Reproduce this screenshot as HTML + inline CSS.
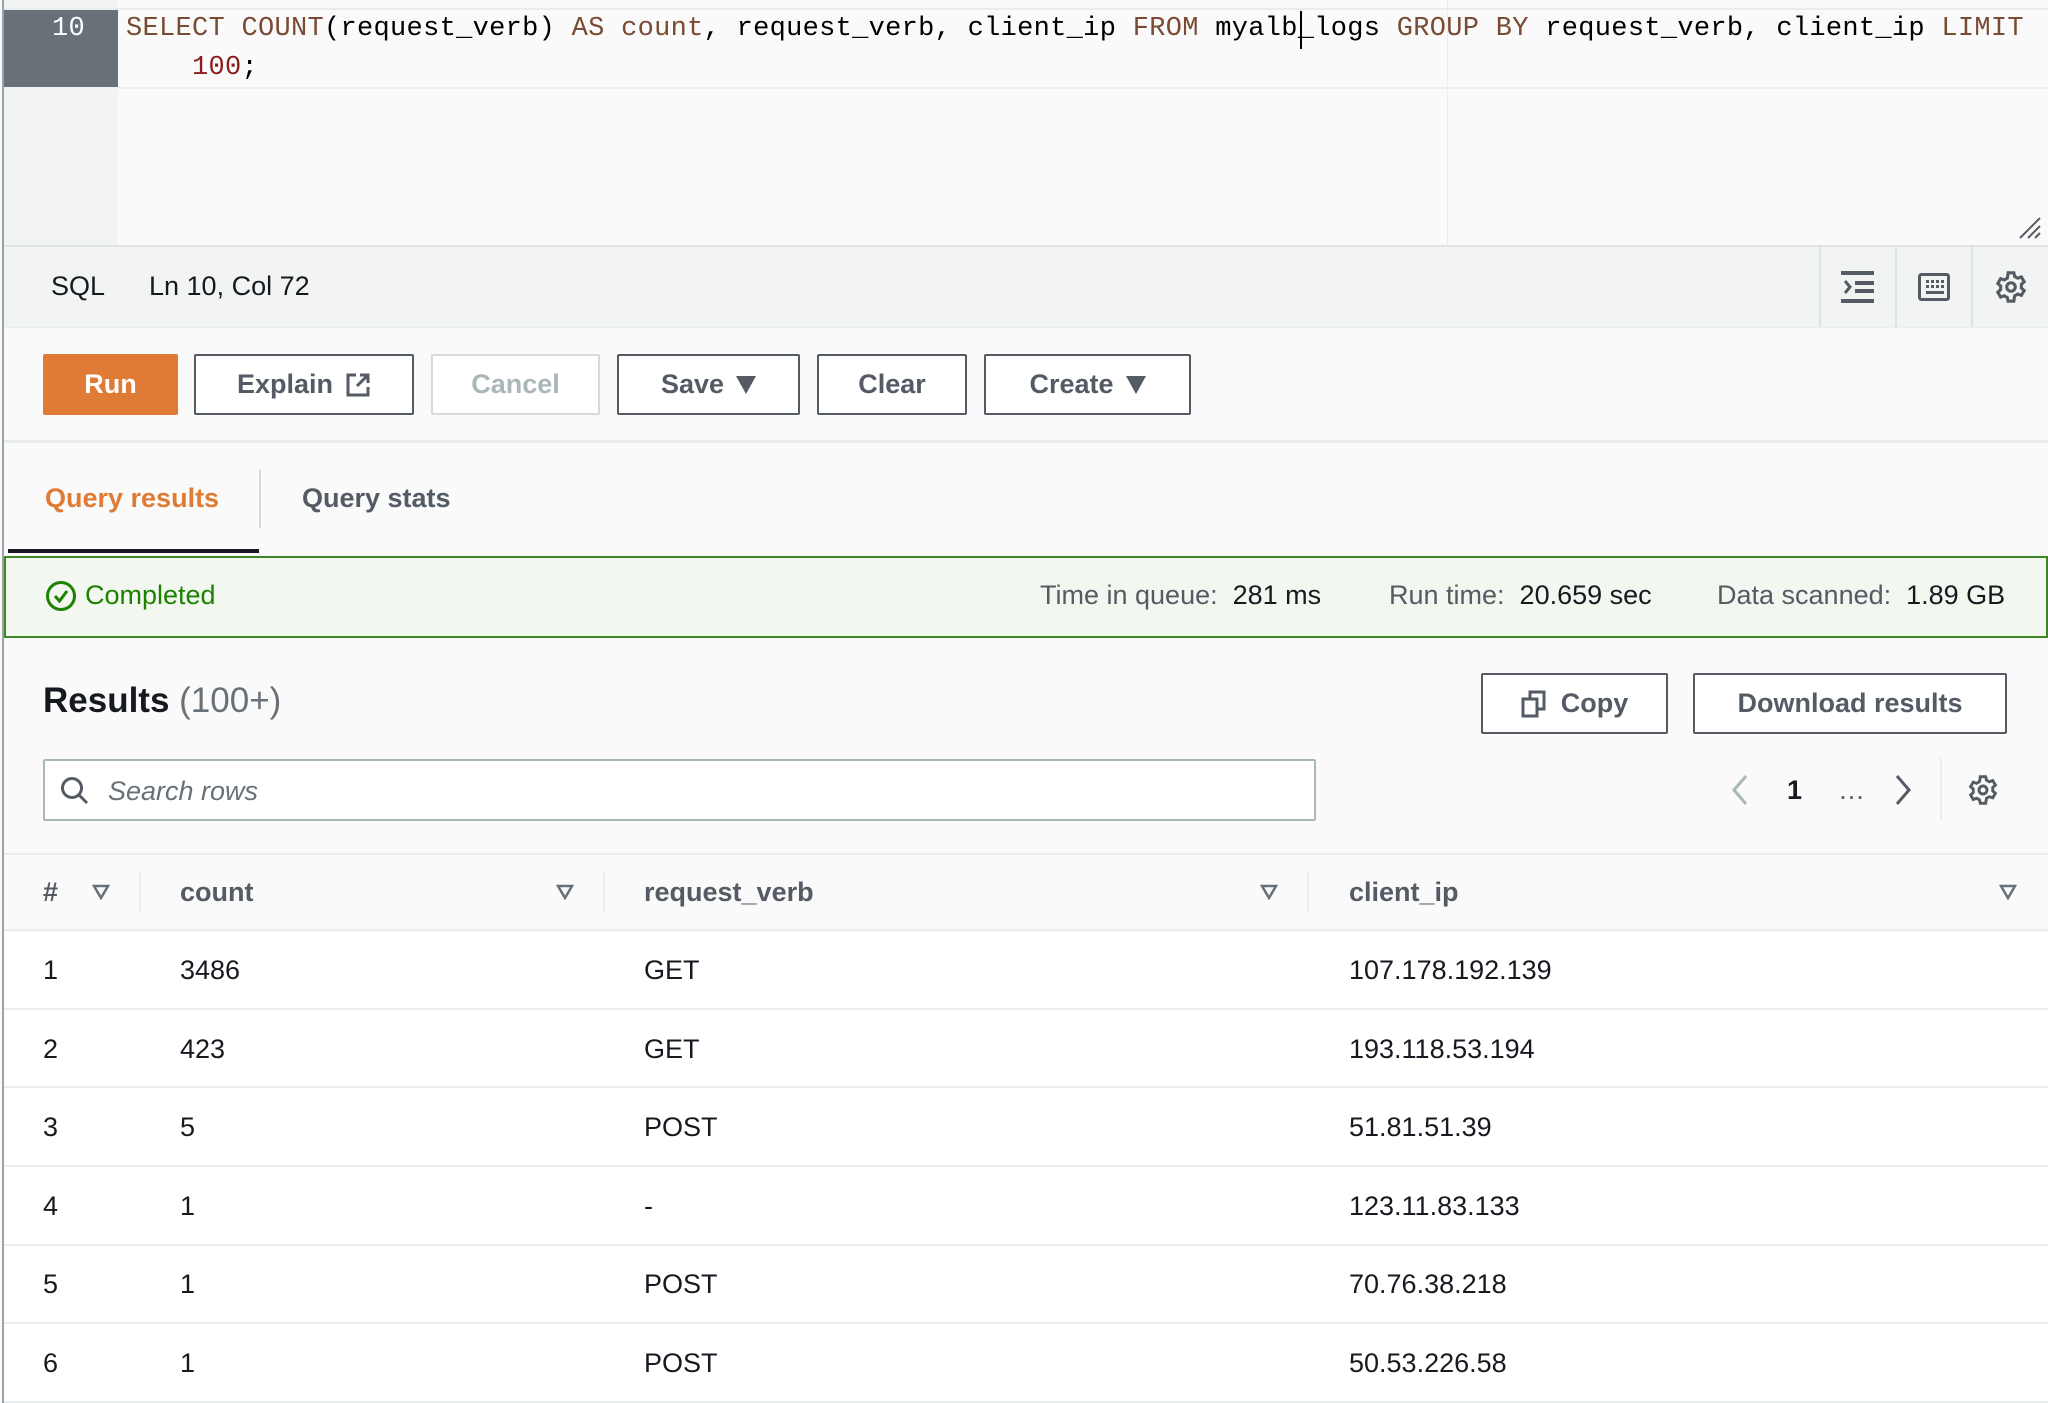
<!DOCTYPE html>
<html><head><meta charset="utf-8"><style>
*{box-sizing:border-box;margin:0;padding:0}
body{width:2048px;height:1403px;overflow:hidden;background:#fafafa;font-family:"Liberation Sans",sans-serif;color:#16191f;position:relative}
.a{position:absolute}
.mono{font-family:"Liberation Mono",monospace;font-size:27px;letter-spacing:0.3px;white-space:pre;color:#000}
.k{color:#7a4b34}
.n{color:#8b1c1c}
.btn{position:absolute;top:354px;height:61px;border:2px solid #545b64;border-radius:2px;background:#fff;font-weight:bold;font-size:27px;color:#545b64;display:flex;align-items:center;justify-content:center;gap:12px}
.t27{font-size:27px}
.hd{position:absolute;top:877px;font-weight:bold;font-size:27px;color:#545b64}
.cell{position:absolute;font-size:27px;color:#16191f}
.rl{position:absolute;left:4px;right:0;height:2px;background:#eaeded}
.vd{position:absolute;width:2px;background:#eaeded}
.tri{position:absolute;top:884px}
</style></head><body>
<div class="a" style="left:2px;top:0;width:2px;height:1403px;background:#9aa3a8"></div>
<!-- editor -->
<div class="a" style="left:4px;top:0;width:114px;height:246px;background:#f2f3f3"></div>
<div class="a" style="left:4px;top:8px;right:0;height:2px;background:#eaeded"></div>
<div class="a" style="left:4px;top:10px;width:114px;height:77px;background:#687078"></div>
<div class="a" style="left:118px;top:87px;right:0;height:2px;background:#eaeded"></div>
<div class="a" style="left:1447px;top:0;width:1px;height:246px;background:#eaeded"></div>
<div class="a mono" style="left:52px;top:14px;color:#fff">10</div>
<div class="a mono" style="left:126px;top:14px"><span class="k">SELECT COUNT</span>(request_verb) <span class="k">AS count</span>, request_verb, client_ip <span class="k">FROM</span> myalb_logs <span class="k">GROUP BY</span> request_verb, client_ip <span class="k">LIMIT</span></div>
<div class="a mono" style="left:192px;top:53px"><span class="n">100</span>;</div>
<div class="a" style="left:1300px;top:11px;width:2px;height:38px;background:#000"></div>
<svg class="a" style="left:2018px;top:216px" width="24" height="24"><path d="M2 22L22 2M10 22L22 10M17 22L22 17" stroke="#545b64" stroke-width="2"/></svg>
<!-- status bar -->
<div class="a" style="left:4px;top:245px;right:0;height:2px;background:#e1e4e4"></div>
<div class="a" style="left:4px;top:247px;right:0;height:80px;background:#f2f3f3"></div>
<div class="a t27" style="left:51px;top:271px">SQL</div>
<div class="a t27" style="left:149px;top:271px">Ln 10, Col 72</div>
<div class="vd" style="left:1819px;top:247px;height:80px;background:#dfe2e2"></div>
<div class="vd" style="left:1895px;top:247px;height:80px;background:#dfe2e2"></div>
<div class="vd" style="left:1971px;top:247px;height:80px;background:#dfe2e2"></div>
<svg class="a" style="left:1841px;top:271px" width="33" height="32"><rect x="0" y="0" width="33" height="4" fill="#545b64"/><rect x="0" y="28" width="33" height="4" fill="#545b64"/><rect x="14" y="10" width="19" height="4" fill="#545b64"/><rect x="14" y="18" width="19" height="4" fill="#545b64"/><path d="M4 10l5 6-5 6" stroke="#545b64" stroke-width="3" fill="none"/></svg>
<svg class="a" style="left:1918px;top:273px" width="32" height="28"><rect x="1.5" y="1.5" width="29" height="25" rx="2" fill="none" stroke="#545b64" stroke-width="3"/><g fill="#545b64"><rect x="8" y="7" width="3" height="3"/><rect x="13" y="7" width="3" height="3"/><rect x="18" y="7" width="3" height="3"/><rect x="23" y="7" width="3" height="3"/><rect x="8" y="12" width="3" height="3"/><rect x="13" y="12" width="3" height="3"/><rect x="18" y="12" width="3" height="3"/><rect x="23" y="12" width="3" height="3"/><rect x="8" y="18" width="18" height="3"/></g></svg>
<svg class="a" style="left:1994px;top:270px" width="34" height="34" viewBox="0 0 24 24"><path fill="none" stroke="#545b64" stroke-width="2.2" d="M10 2h4l.6 2.6 2.2 1.2 2.5-.9 2 3.4-2 1.8v2.6l2 1.8-2 3.4-2.5-.9-2.2 1.2L14 22h-4l-.6-2.6-2.2-1.2-2.5.9-2-3.4 2-1.8v-2.6l-2-1.8 2-3.4 2.5.9 2.2-1.2z"/><circle cx="12" cy="12" r="3" fill="none" stroke="#545b64" stroke-width="2.2"/></svg>
<!-- toolbar -->
<div class="a" style="left:4px;top:327px;right:0;height:1px;background:#eaeded"></div>
<div class="btn" style="left:43px;width:135px;background:#e07b35;border-color:#e07b35;color:#fff">Run</div>
<div class="btn" style="left:194px;width:220px">Explain <svg width="26" height="26" viewBox="0 0 26 26"><path d="M11 3H3v20h20v-8" fill="none" stroke="#545b64" stroke-width="3"/><path d="M15 3h8v8M23 3L12 14" fill="none" stroke="#545b64" stroke-width="3"/></svg></div>
<div class="btn" style="left:431px;width:169px;border-color:#d5dbdb;color:#aab7b8">Cancel</div>
<div class="btn" style="left:617px;width:183px">Save <svg width="20" height="18"><path d="M0 0h20L10 18z" fill="#545b64"/></svg></div>
<div class="btn" style="left:817px;width:150px">Clear</div>
<div class="btn" style="left:984px;width:207px">Create <svg width="20" height="18"><path d="M0 0h20L10 18z" fill="#545b64"/></svg></div>
<div class="a" style="left:4px;top:440px;right:0;height:3px;background:#eaeded"></div>
<!-- tabs -->
<div class="a" style="left:45px;top:483px;font-size:27px;font-weight:bold;color:#e07b35">Query results</div>
<div class="a" style="left:302px;top:483px;font-size:27px;font-weight:bold;color:#545b64">Query stats</div>
<div class="a" style="left:259px;top:470px;width:2px;height:58px;background:#d5dbdb"></div>
<div class="a" style="left:8px;top:549px;width:251px;height:4px;background:#16191f"></div>
<!-- alert -->
<div class="a" style="left:4px;top:556px;width:2044px;height:82px;border:2px solid #3f8624;background:#f2f8f0"></div>
<svg class="a" style="left:45px;top:580px" width="32" height="32"><circle cx="16" cy="16" r="13.5" fill="none" stroke="#1d8102" stroke-width="3"/><path d="M10 16l4.5 5 7.5-10" fill="none" stroke="#1d8102" stroke-width="3"/></svg>
<div class="a t27" style="left:85px;top:580px;color:#1d8102">Completed</div>
<div class="a t27" style="left:1040px;top:580px;color:#545b64">Time in queue:&nbsp; <span style="color:#16191f">281 ms</span></div>
<div class="a t27" style="left:1389px;top:580px;color:#545b64">Run time:&nbsp; <span style="color:#16191f">20.659 sec</span></div>
<div class="a t27" style="left:1717px;top:580px;color:#545b64">Data scanned:&nbsp; <span style="color:#16191f">1.89 GB</span></div>
<!-- results header -->
<div class="a" style="left:43px;top:681px;font-size:35px;font-weight:bold">Results <span style="font-weight:normal;color:#687078">(100+)</span></div>
<div class="btn" style="left:1481px;top:673px;width:187px">
<svg width="28" height="28" viewBox="0 0 28 28"><rect x="2" y="9" width="14" height="17" fill="none" stroke="#545b64" stroke-width="3"/><path d="M9 9V2h14v17h-7" fill="none" stroke="#545b64" stroke-width="3"/></svg>Copy</div>
<div class="btn" style="left:1693px;top:673px;width:314px">Download results</div>
<div class="a" style="left:43px;top:759px;width:1273px;height:62px;background:#fff;border:2px solid #aab7b8;border-radius:2px"></div>
<svg class="a" style="left:60px;top:776px" width="30" height="30"><circle cx="12" cy="12" r="9.5" fill="none" stroke="#545b64" stroke-width="3"/><path d="M19 19l8 8" stroke="#545b64" stroke-width="3"/></svg>
<div class="a t27" style="left:108px;top:776px;font-style:italic;color:#687078">Search rows</div>
<svg class="a" style="left:1731px;top:774px" width="18" height="32"><path d="M15 2L3 16l12 14" fill="none" stroke="#aab7b8" stroke-width="3"/></svg>
<div class="a t27" style="left:1787px;top:775px;font-weight:bold">1</div>
<div class="a t27" style="left:1838px;top:775px;color:#545b64">…</div>
<svg class="a" style="left:1894px;top:774px" width="18" height="32"><path d="M3 2l12 14L3 30" fill="none" stroke="#545b64" stroke-width="3"/></svg>
<div class="a" style="left:1940px;top:758px;width:2px;height:62px;background:#eaeded"></div>
<svg class="a" style="left:1967px;top:774px" width="32" height="32" viewBox="0 0 24 24"><path fill="none" stroke="#545b64" stroke-width="2.2" d="M10 2h4l.6 2.6 2.2 1.2 2.5-.9 2 3.4-2 1.8v2.6l2 1.8-2 3.4-2.5-.9-2.2 1.2L14 22h-4l-.6-2.6-2.2-1.2-2.5.9-2-3.4 2-1.8v-2.6l-2-1.8 2-3.4 2.5.9 2.2-1.2z"/><circle cx="12" cy="12" r="3" fill="none" stroke="#545b64" stroke-width="2.2"/></svg>
<!-- table -->
<div class="rl" style="top:853px"></div>
<div class="a" style="left:4px;top:932px;right:0;bottom:0;background:#fff"></div>
<div class="hd" style="left:43px">#</div>
<div class="hd" style="left:180px">count</div>
<div class="hd" style="left:644px">request_verb</div>
<div class="hd" style="left:1349px">client_ip</div>
<svg class="tri" style="left:92px" width="18" height="16"><path d="M2 2h14L9 14z" fill="none" stroke="#687078" stroke-width="2.5"/></svg>
<svg class="tri" style="left:556px" width="18" height="16"><path d="M2 2h14L9 14z" fill="none" stroke="#687078" stroke-width="2.5"/></svg>
<svg class="tri" style="left:1260px" width="18" height="16"><path d="M2 2h14L9 14z" fill="none" stroke="#687078" stroke-width="2.5"/></svg>
<svg class="tri" style="left:1999px" width="18" height="16"><path d="M2 2h14L9 14z" fill="none" stroke="#687078" stroke-width="2.5"/></svg>
<div class="vd" style="left:139px;top:873px;height:40px"></div>
<div class="vd" style="left:603px;top:873px;height:40px"></div>
<div class="vd" style="left:1307px;top:873px;height:40px"></div>
<div class="rl" style="top:929px"></div>
<div class="rl" style="top:1008px"></div>
<div class="rl" style="top:1086px"></div>
<div class="rl" style="top:1165px"></div>
<div class="rl" style="top:1244px"></div>
<div class="rl" style="top:1322px"></div>
<div class="rl" style="top:1401px"></div>

<div class="cell" style="left:43px;top:955px">1</div><div class="cell" style="left:180px;top:955px">3486</div><div class="cell" style="left:644px;top:955px">GET</div><div class="cell" style="left:1349px;top:955px">107.178.192.139</div>
<div class="cell" style="left:43px;top:1034px">2</div><div class="cell" style="left:180px;top:1034px">423</div><div class="cell" style="left:644px;top:1034px">GET</div><div class="cell" style="left:1349px;top:1034px">193.118.53.194</div>
<div class="cell" style="left:43px;top:1112px">3</div><div class="cell" style="left:180px;top:1112px">5</div><div class="cell" style="left:644px;top:1112px">POST</div><div class="cell" style="left:1349px;top:1112px">51.81.51.39</div>
<div class="cell" style="left:43px;top:1191px">4</div><div class="cell" style="left:180px;top:1191px">1</div><div class="cell" style="left:644px;top:1191px">-</div><div class="cell" style="left:1349px;top:1191px">123.11.83.133</div>
<div class="cell" style="left:43px;top:1269px">5</div><div class="cell" style="left:180px;top:1269px">1</div><div class="cell" style="left:644px;top:1269px">POST</div><div class="cell" style="left:1349px;top:1269px">70.76.38.218</div>
<div class="cell" style="left:43px;top:1348px">6</div><div class="cell" style="left:180px;top:1348px">1</div><div class="cell" style="left:644px;top:1348px">POST</div><div class="cell" style="left:1349px;top:1348px">50.53.226.58</div>
</body></html>
